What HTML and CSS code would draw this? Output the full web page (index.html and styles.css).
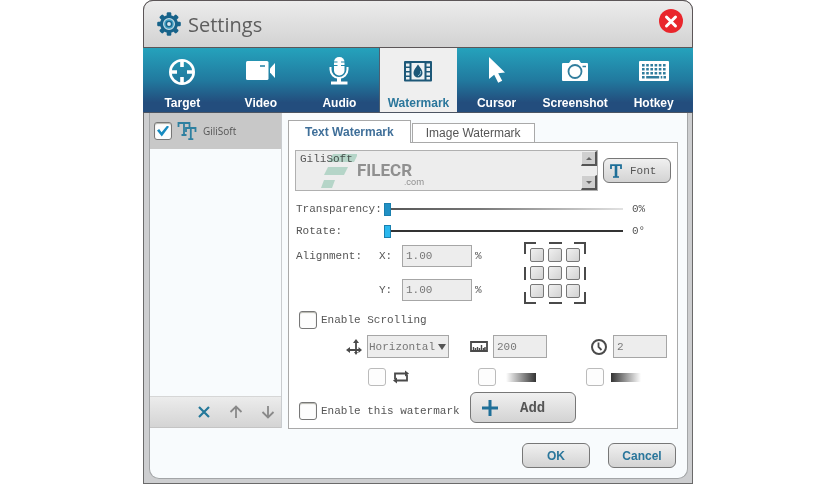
FILE: index.html
```
<!doctype html>
<html lang="en">
  <head>
    <meta charset="UTF-8" />
    <title>Settings</title>
    <link rel="stylesheet" href="styles.css" />
  </head>
  <body>
    <div class="window">
      <header class="title-bar">
        <svg class="gear" viewBox="0 0 24 24" width="24" height="24">
          <g fill="#17638a">
            <circle cx="12" cy="12" r="9" />
            <g id="teeth">
              <rect x="9.7" y="0.2" width="4.6" height="23.6" rx="1.2" />
              <rect x="0.2" y="9.7" width="23.6" height="4.6" rx="1.2" />
            </g>
            <use href="#teeth" transform="rotate(45 12 12)" />
          </g>
          <circle cx="12" cy="12" r="5.4" fill="#3f9fc4" stroke="#c6dce6" stroke-width="1.2" />
          <circle cx="12" cy="12" r="2.6" fill="#dce8ee" stroke="#17638a" stroke-width="1.4" />
        </svg>
        <h1>Settings</h1>
        <button class="close" aria-label="Close">
          <svg viewBox="0 0 24 24" width="24" height="24">
            <circle cx="12" cy="12" r="12" fill="#e9262c" />
            <path d="M7.5 8l9 9M16.5 8l-9 9" stroke="#fff" stroke-width="3" stroke-linecap="round" />
          </svg>
        </button>
      </header>

      <nav class="toolbar">
        <button class="tool">
          <svg viewBox="0 0 30 30" width="30" height="30" fill="none" stroke="#fff">
            <circle cx="15" cy="15" r="11.7" stroke-width="2.6" />
            <path d="M15 4v6M15 20v6M4 15h6M20 15h6" stroke-width="3.6" />
          </svg>
          Target
        </button>
        <button class="tool">
          <svg viewBox="0 0 30 30" width="30" height="30" fill="#fff">
            <rect x="0" y="4" width="22.5" height="19" rx="1.5" />
            <path d="M24 11.5l5-5.5v15l-5-5.5z" />
            <path d="M14 9h5" stroke="#1f7fa3" stroke-width="1.5" />
          </svg>
          Video
        </button>
        <button class="tool">
          <svg viewBox="0 0 30 30" width="30" height="30" fill="none" stroke="#fff">
            <rect x="10" y="0" width="10.5" height="18.5" rx="5" fill="#fff" stroke="none" />
            <path d="M9 5h4.500M9 8.500h4.500M17 5h5M17 8.500h5" stroke="#2389aa" />
            <path d="M6.500 10v2.500a8.500 8.500 0 0 0 17 0V10" stroke-width="2" />
            <path d="M15 20v6" stroke-width="4" />
            <path d="M7 26h16.500" stroke-width="3" />
          </svg>
          Audio
        </button>
        <button class="tool active">
          <svg viewBox="0 0 30 30" width="30" height="30">
            <rect x="1" y="4" width="28" height="20.5" rx="1" fill="#1d5878" />
            <rect x="8.5" y="6" width="13" height="16.5" fill="#eef2f4" />
            <g fill="#eef2f4">
              <path d="M3 6.500h3.500v3H3zM3 11h3.500v3H3zM3 15.500h3.500v3H3zM3 20h3.500v2.500H3z" />
              <path d="M23.500 6.500H27v3h-3.500zM23.500 11H27v3h-3.500zM23.500 15.500H27v3h-3.500zM23.500 20H27v2.500h-3.500z" />
            </g>
            <path d="M15 7.500c2.500 3.500 4.500 5.500 4.500 8.500a4.500 4.500 0 0 1-9 0c0-3 2-5 4.500-8.500z" fill="#1d5878" />
            <path d="M17.500 14c.5 2.500-.5 4-2.500 4.800" fill="none" stroke="#8fc0d4" />
          </svg>
          Watermark
        </button>
        <button class="tool">
          <svg viewBox="0 0 30 30" width="30" height="30" fill="#fff">
            <path d="M7 0v22l5.200-4.200 4 8 4-2-4-7.600 6.800-.7z" />
          </svg>
          Cursor
        </button>
        <button class="tool">
          <svg viewBox="0 0 30 30" width="30" height="30">
            <path d="M3 6h6l2-3h8l2 3h6q1 0 1 1v16q0 1-1 1H3q-1 0-1-1V7q0-1 1-1z" fill="#fff" />
            <circle cx="15" cy="14.5" r="6.5" fill="#fff" stroke="#327e9d" stroke-width="1.8" />
            <path d="M22.500 9.500h3.500" stroke="#327e9d" stroke-width="1.5" />
          </svg>
          Screenshot
        </button>
        <button class="tool">
          <svg viewBox="0 0 30 30" width="30" height="30">
            <rect y="4" width="30" height="20" rx="1" fill="#fff" />
            <g stroke="#307d9d" stroke-width="2.6">
              <path d="M3 8.300h24" stroke-dasharray="2.6 1.6" />
              <path d="M3 12.300h24" stroke-dasharray="2.6 1.6" />
              <path d="M3 16.300h24" stroke-dasharray="2.6 1.6" />
              <path d="M3 20.300h2.600M7.200 20.300h13M21.700 20.300h1.600M24.500 20.300H27" />
            </g>
          </svg>
          Hotkey
        </button>
      </nav>

      <div class="content">
        <aside class="sidebar">
          <label class="list-item">
            <input type="checkbox" class="check" checked />
            <svg viewBox="0 0 20 20" width="20" height="20" fill="none" stroke="#2e80a0">
              <path d="M1.500 6V2h11v4M7 2v12M4.500 14h5" stroke-width="1.8" />
              <path d="M9 11V7h9.500v4M13.800 7v11M11.300 18.200h5" stroke-width="1.8" />
            </svg>
            <span>GiliSoft</span>
          </label>
          <div class="list-actions">
            <button aria-label="Delete">
              <svg viewBox="0 0 14 14" width="14" height="14" stroke="#24789a">
                <path d="M2 2l10 10M12 2L2 12" stroke-width="2.2" />
              </svg>
            </button>
            <button aria-label="Move up">
              <svg viewBox="0 0 14 14" width="14" height="14" fill="none" stroke="#898989">
                <path d="M7 13V1.500M1.500 7L7 1.500 12.500 7" stroke-width="1.8" />
              </svg>
            </button>
            <button aria-label="Move down">
              <svg viewBox="0 0 14 14" width="14" height="14" fill="none" stroke="#898989">
                <path d="M7 1v11.500M1.500 7L7 12.500 12.500 7" stroke-width="1.8" />
              </svg>
            </button>
          </div>
        </aside>

        <main class="main">
          <div class="tabs">
            <button class="tab selected">Text Watermark</button>
            <button class="tab">Image Watermark</button>
          </div>

          <form class="panel">
            <div class="text-row">
              <div class="text-box">
                <textarea aria-label="Watermark text">GiliSoft</textarea>
                <div class="scroll">
                  <button type="button" class="up" aria-label="Scroll up"></button>
                  <button type="button" class="down" aria-label="Scroll down"></button>
                </div>
                <div class="stamp">
                  <svg viewBox="0 0 36 34" width="36" height="34" fill="#c3e6d8">
                    <path d="M12 0h25l-4 8H7zM7 13h20l-4 8H3zM3 26h11l-3 8H0z" />
                  </svg>
                  <div class="stamp-name">FILECR<small>.com</small></div>
                </div>
              </div>
              <button type="button" class="btn font-btn">
                <svg viewBox="0 0 12 14" width="12" height="14" fill="none" stroke="#1e6f98">
                  <path d="M1 5V1.200h10V5" stroke-width="1.8" />
                  <path d="M6 1v12" stroke-width="2.6" />
                  <path d="M3 13h6" stroke-width="1.6" />
                </svg>
                Font
              </button>
            </div>

            <div class="slider-row">
              <label for="transparency">Transparency:</label>
              <input type="range" id="transparency" class="fade" min="0" max="100" value="0" />
              <output for="transparency">0%</output>
            </div>
            <div class="slider-row">
              <label for="rotate">Rotate:</label>
              <input type="range" id="rotate" min="0" max="360" value="0" />
              <output for="rotate">0°</output>
            </div>

            <div class="align-row">
              <span class="align-label">Alignment:</span>
              <div class="axes">
                <div class="axis">
                  <label for="pos-x">X:</label>
                  <input type="text" class="field" id="pos-x" value="1.00" />
                  <span>%</span>
                </div>
                <div class="axis">
                  <label for="pos-y">Y:</label>
                  <input type="text" class="field" id="pos-y" value="1.00" />
                  <span>%</span>
                </div>
              </div>
              <div class="anchor">
                <svg viewBox="0 0 62 62" width="62" height="62" fill="none" stroke="#4a4a4a" stroke-width="2">
                  <path d="M1 12V1h11M25 1h13M50 1h11v11M61 25v13M61 50v11H50M38 61H25M12 61H1V50M1 38V25" />
                </svg>
                <div class="anchor-cells">
                  <button type="button" aria-label="Top left"></button>
                  <button type="button" aria-label="Top"></button>
                  <button type="button" aria-label="Top right"></button>
                  <button type="button" aria-label="Left"></button>
                  <button type="button" aria-label="Center"></button>
                  <button type="button" aria-label="Right"></button>
                  <button type="button" aria-label="Bottom left"></button>
                  <button type="button" aria-label="Bottom"></button>
                  <button type="button" aria-label="Bottom right"></button>
                </div>
              </div>
            </div>

            <label class="check-row">
              <input type="checkbox" class="check" />
              Enable Scrolling
            </label>

            <div class="scroll-grid">
              <div class="cell">
                <svg viewBox="0 0 16 16" width="16" height="16" fill="none" stroke="#4a4a4a">
                  <path d="M3 11h10M10 3v11" stroke-width="1.8" />
                  <path d="M4 8L0 11l4 3zM12.500 8l3.500 3-3.500 3zM7 4l3-4 3 4zM8 13h4l-2 3z" fill="#4a4a4a" stroke="none" />
                </svg>
                <span class="select-wrap">
                  <select aria-label="Direction">
                    <option>Horizontal</option>
                    <option>Vertical</option>
                  </select>
                </span>
              </div>
              <div class="cell">
                <svg viewBox="0 0 18 12" width="18" height="12" fill="none" stroke="#4a4a4a">
                  <path d="M1 1h16v9H1z" stroke-width="1.8" />
                  <path d="M3.500 10V6M5.500 10V7M7.500 10V6M9.500 10V7M11.500 10V4M13.500 10V7M15 10V6" stroke-width="1.4" />
                </svg>
                <input type="text" class="field" value="200" aria-label="Distance" />
              </div>
              <div class="cell">
                <svg viewBox="0 0 18 18" width="18" height="18" fill="none" stroke="#4a4a4a">
                  <circle cx="9" cy="9" r="7" stroke-width="2" />
                  <path d="M8.500 4.500V9l3 3" stroke-width="1.8" />
                </svg>
                <input type="text" class="field" value="2" aria-label="Duration" />
              </div>
              <div class="cell">
                <input type="checkbox" class="check faint" aria-label="Loop" />
                <svg viewBox="0 0 16 14" width="16" height="14" fill="none" stroke="#4a4a4a">
                  <path d="M2 9V3.500h11M14 5v5.500H3" stroke-width="1.8" />
                  <path d="M12 .5l4 3-4 3zM4 7.500l-4 3 4 3z" fill="#4a4a4a" stroke="none" />
                </svg>
              </div>
              <div class="cell">
                <input type="checkbox" class="check faint" aria-label="Fade in" />
                <span class="ramp ramp-in"></span>
              </div>
              <div class="cell">
                <input type="checkbox" class="check faint" aria-label="Fade out" />
                <span class="ramp ramp-out"></span>
              </div>
            </div>

            <div class="add-row">
              <label class="check-row">
                <input type="checkbox" class="check" />
                Enable this watermark
              </label>
              <button type="button" class="btn add-btn">
                <svg viewBox="0 0 16 16" width="16" height="16" stroke="#1e6f98">
                  <path d="M8 0v16M0 8h16" stroke-width="3" />
                </svg>
                Add
              </button>
            </div>
          </form>

          <div class="dialog-actions">
            <button class="btn">OK</button>
            <button class="btn">Cancel</button>
          </div>
        </main>
      </div>
    </div>
  </body>
</html>
```
FILE: styles.css
```
* {
  box-sizing: border-box;
}

body {
  margin: 0;
  padding: 0 143px;
  background: #fff;
  font-family: 'Liberation Sans', Arial, sans-serif;
  font-size: 12px;
  color: #555;
}

button {
  margin: 0;
  padding: 0;
  border: none;
  background: none;
  font: inherit;
  color: inherit;
}

svg {
  display: block;
  flex: none;
}

.window {
  display: flex;
  flex-direction: column;
  min-height: 100vh;
  background: #cdced0;
  border-radius: 10px 10px 0 0;
  box-shadow: inset 0 0 0 1px #6a6a6a;
}

/* Title bar */
.title-bar {
  display: flex;
  align-items: center;
  height: 48px;
  padding: 0 9px 0 13px;
  background: linear-gradient(#ececec, #d2d2d2);
  border: 1px solid #5c5658;
  border-radius: 10px 10px 0 0;
}

h1 {
  margin: 0 auto 0 7px;
  font-family: 'Open Sans', sans-serif;
  font-size: 20px;
  font-weight: normal;
  color: #5d5d5d;
}

.close {
  margin-bottom: 6px;
}

/* Toolbar */
.toolbar {
  display: grid;
  grid-template-columns: repeat(7, 1fr);
  background: linear-gradient(#25a2bc, #217a9f 50%, #234d7d 85%);
  border-bottom: 1px solid #4c5563;
}

.tool {
  display: flex;
  flex-direction: column;
  align-items: center;
  gap: 9px;
  padding: 9px 0 2px;
  font-weight: bold;
  line-height: 14px;
  color: #fff;
}

.tool.active {
  background: #efefef;
  border-left: 1px solid #4c5f70;
  color: #2a769b;
}

/* Body */
.content {
  display: flex;
  flex: 1;
  margin: 0 5px 5px 6px;
  background: #f8fbfd;
  border: 1px solid #a3a5a7;
  border-top: none;
  border-radius: 0 0 10px 10px;
}

.sidebar {
  display: flex;
  flex-direction: column;
  flex: 0 0 132px;
  margin-bottom: 50px;
  border-right: 1px solid #c9cccf;
}

.list-item {
  display: flex;
  align-items: center;
  height: 36px;
  padding-left: 4px;
  background: #c8c8c8;
  font-family: 'Open Sans', sans-serif;
  font-size: 10px;
}

.list-item svg {
  margin: 0 6px 0 5px;
}

.list-actions {
  display: flex;
  justify-content: flex-end;
  align-items: center;
  gap: 18px;
  height: 32px;
  margin-top: auto;
  padding-right: 6px;
  background: linear-gradient(#ececec, #d4d4d4);
  border-top: 1px solid #d6d6d6;
  border-bottom: 1px solid #c4c4c4;
}

.main {
  flex: 1;
  min-width: 0;
  padding: 7px 9px 0 6px;
}

.tabs {
  display: flex;
  align-items: flex-end;
  gap: 1px;
}

.tab {
  height: 19px;
  padding: 0 13px;
  background: #fff;
  border: 1px solid #a9a9a9;
  border-bottom: none;
}

.tab.selected {
  position: relative;
  height: 23px;
  margin-bottom: -1px;
  padding: 0 16px;
  font-weight: bold;
  color: #3f6f99;
}

.panel {
  padding: 7px 6px 5px;
  background: #fff;
  border: 1px solid #a9a9a9;
  font-family: 'Liberation Mono', 'Courier New', monospace;
  font-size: 11px;
}

/* Check boxes */
.check {
  appearance: none;
  flex: none;
  display: grid;
  place-content: center;
  width: 18px;
  height: 18px;
  margin: 0;
  background: #fdfdfd;
  border: 1px solid #777;
  border-radius: 3px;
  box-shadow: inset 0 1px 1px #b5b5ac;
}

.check:checked::before {
  content: '';
  width: 12px;
  height: 11px;
  background: #178bc0;
  clip-path: polygon(0 45%, 18% 32%, 38% 62%, 85% 0, 100% 12%, 40% 100%);
}

.check.faint {
  border-color: #bbb;
  box-shadow: none;
}

.check-row {
  display: flex;
  align-items: center;
  gap: 4px;
  padding-left: 4px;
}

/* Buttons */
.btn {
  display: flex;
  align-items: center;
  justify-content: center;
  width: 68px;
  height: 25px;
  background: linear-gradient(#f0f0f0, #d3d3d3);
  border: 1px solid #777;
  border-radius: 6px;
}

.font-btn {
  justify-content: flex-start;
  gap: 8px;
  padding-left: 6px;
}

/* Watermark text */
.text-row {
  display: flex;
  align-items: center;
  gap: 5px;
  margin-bottom: 7px;
}

.text-box {
  position: relative;
  display: flex;
  flex: 1;
  height: 41px;
  background: #ededed;
  border: 1px solid #b0b0b0;
}

textarea {
  flex: 1;
  min-width: 0;
  padding: 2px 4px;
  background: none;
  border: none;
  resize: none;
  font: inherit;
  color: #555;
}

.scroll {
  display: flex;
  flex-direction: column;
  justify-content: space-between;
}

.scroll button {
  display: grid;
  place-content: center;
  width: 16px;
  height: 15px;
  background: #cfcfcf;
  border: 1px solid #eee;
  border-right: 2px solid #555;
  border-bottom: 2px solid #555;
}

.scroll button::before {
  content: '';
  border: 3px solid transparent;
}

.scroll .up::before {
  border-top: none;
  border-bottom-color: #666;
}

.scroll .down::before {
  border-bottom: none;
  border-top-color: #666;
}

/* Logo stamped over the text box */
.stamp {
  position: absolute;
  top: 3px;
  left: 25px;
  display: flex;
  mix-blend-mode: multiply;
  pointer-events: none;
}

.stamp-name {
  display: flex;
  flex-direction: column;
  margin-top: 8px;
  font-family: Roboto, sans-serif;
  font-size: 17px;
  font-weight: bold;
  line-height: 16px;
  color: #9b9b9b;
}

.stamp-name small {
  margin-right: -12px;
  text-align: right;
  font-size: 9px;
  font-weight: normal;
  line-height: 9px;
}

/* Sliders */
.slider-row {
  display: grid;
  grid-template-columns: 89px 1fr 48px;
  align-items: center;
  height: 22px;
}

.slider-row label {
  padding-left: 1px;
}

.slider-row output {
  padding-left: 9px;
}

input[type='range'] {
  appearance: none;
  width: 100%;
  height: 14px;
  margin: 0;
  background: linear-gradient(#333, #333) center / 100% 2px no-repeat;
}

input[type='range'].fade {
  background-image: linear-gradient(to right, #555, #777 40%, #e2e2e2);
}

input[type='range']::-webkit-slider-thumb {
  appearance: none;
  width: 7px;
  height: 13px;
  background: #2bb8ee;
  border: 1px solid #1a7fae;
}

input.fade::-webkit-slider-thumb {
  background: #2090c4;
}

/* Alignment */
.align-row {
  display: flex;
  height: 62px;
}

.align-label {
  width: 84px;
  padding: 8px 0 0 1px;
}

.axes {
  display: flex;
  flex-direction: column;
  gap: 12px;
  padding-top: 3px;
}

.axis {
  display: flex;
  align-items: center;
}

.axis label {
  width: 23px;
}

.field,
select {
  height: 23px;
  padding: 0 3px;
  background: #ededed;
  border: 1px solid #a6a6a6;
  border-radius: 0;
  font: inherit;
  color: #777;
}

.axis .field {
  width: 70px;
  height: 22px;
  margin-right: 3px;
}

.anchor {
  position: relative;
  margin-left: 42px;
}

.anchor-cells {
  position: absolute;
  inset: 6px;
  display: grid;
  grid-template-columns: repeat(3, 14px);
  grid-auto-rows: 14px;
  gap: 4px;
}

.anchor-cells button {
  background: linear-gradient(135deg, #f0f0f0, #d2d2d2);
  border: 1px solid #777;
  border-radius: 2px;
}

/* Scrolling options */
.panel > .check-row {
  height: 31px;
}

.scroll-grid {
  display: grid;
  grid-template-columns: 114px 115px 1fr;
  grid-template-rows: 23px 30px;
  row-gap: 4px;
  padding-left: 51px;
}

.cell {
  display: flex;
  align-items: center;
  gap: 5px;
}

.cell:nth-child(2) {
  padding-left: 10px;
}

.cell:nth-child(3) {
  padding-left: 15px;
}

.cell .field {
  width: 54px;
}

.cell:nth-child(n + 4) {
  gap: 7px;
  padding-left: 22px;
}

.cell:nth-child(n + 5) {
  gap: 10px;
  padding-left: 18px;
}

.cell:nth-child(6) {
  gap: 7px;
  padding-left: 11px;
}

.select-wrap {
  position: relative;
}

.select-wrap::after {
  content: '';
  position: absolute;
  top: 9px;
  right: 3px;
  border: 4px solid transparent;
  border-top: 6px solid #555;
  border-bottom: none;
  pointer-events: none;
}

select {
  appearance: none;
  width: 82px;
  padding: 0 1px;
}

.ramp {
  width: 30px;
  height: 9px;
}

.ramp-in {
  background: linear-gradient(to right, #fff, #333);
}

.ramp-out {
  background: linear-gradient(to left, #fff, #333);
}

.add-row {
  display: flex;
  align-items: flex-end;
}

.add-row .check-row {
  flex: 0 0 175px;
  padding-bottom: 3px;
  white-space: nowrap;
}

.add-btn {
  justify-content: flex-start;
  gap: 22px;
  width: 106px;
  height: 31px;
  padding-left: 11px;
  font-size: 14px;
  font-weight: bold;
}

.dialog-actions {
  display: flex;
  justify-content: flex-end;
  gap: 18px;
  padding: 14px 2px 10px;
  font-weight: bold;
  color: #2a769b;
}
```
